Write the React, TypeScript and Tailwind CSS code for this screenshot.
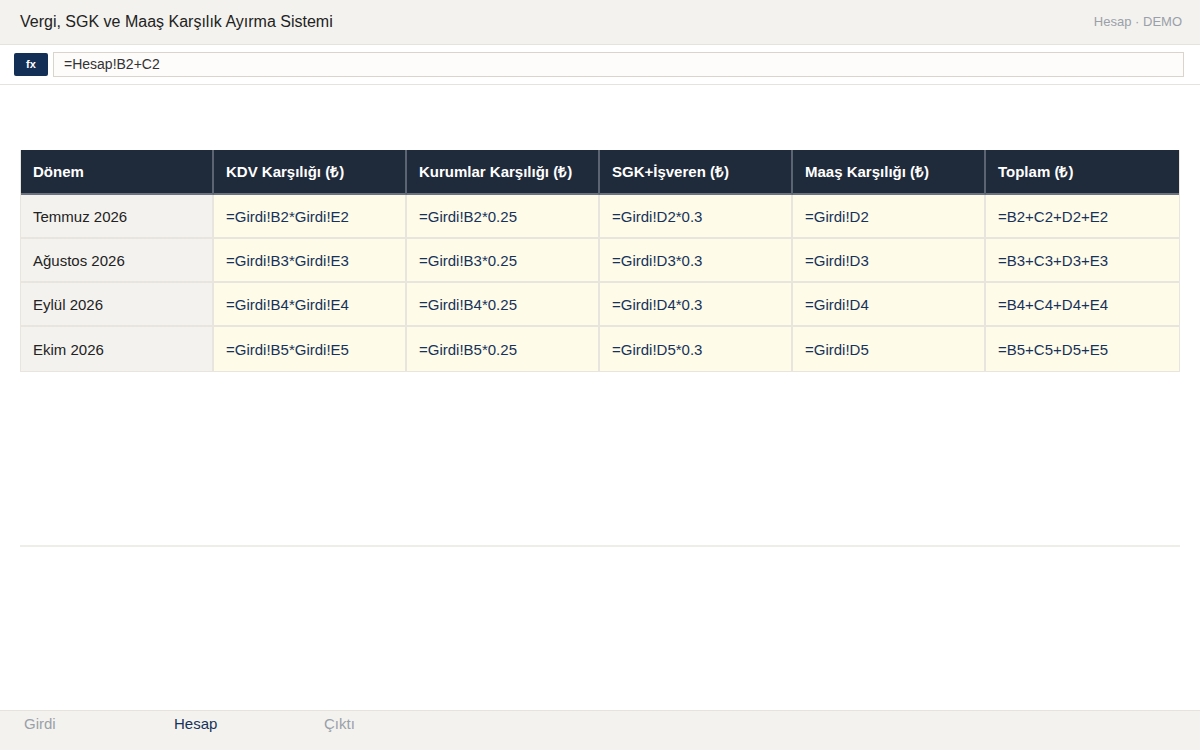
import React from 'react'

const cols = ['Dönem', 'KDV Karşılığı (₺)', 'Kurumlar Karşılığı (₺)', 'SGK+İşveren (₺)', 'Maaş Karşılığı (₺)', 'Toplam (₺)']

const rows = [
  ['Temmuz 2026', '=Girdi!B2*Girdi!E2', '=Girdi!B2*0.25', '=Girdi!D2*0.3', '=Girdi!D2', '=B2+C2+D2+E2'],
  ['Ağustos 2026', '=Girdi!B3*Girdi!E3', '=Girdi!B3*0.25', '=Girdi!D3*0.3', '=Girdi!D3', '=B3+C3+D3+E3'],
  ['Eylül 2026', '=Girdi!B4*Girdi!E4', '=Girdi!B4*0.25', '=Girdi!D4*0.3', '=Girdi!D4', '=B4+C4+D4+E4'],
  ['Ekim 2026', '=Girdi!B5*Girdi!E5', '=Girdi!B5*0.25', '=Girdi!D5*0.3', '=Girdi!D5', '=B5+C5+D5+E5'],
]

const App = () => {
  return (
    <div className="h-screen flex flex-col bg-white text-[#222] font-['Liberation_Sans',Arial,sans-serif]">
      <div className="h-[45px] shrink-0 bg-[#f3f2ee] border-b border-[#e6e3dc] flex items-center justify-between px-5">
        <div className="text-[16px] text-[#222]">Vergi, SGK ve Maaş Karşılık Ayırma Sistemi</div>
        <div className="text-[13px] text-[#9aa0aa] mr-[-2px]">Hesap · DEMO</div>
      </div>

      <div className="h-[40px] shrink-0 border-b border-[#e6e3dc] flex items-center gap-[5px] pl-[14px] pr-4">
        <div className="w-[34px] h-[23px] bg-[#142f55] text-white text-[11px] font-bold flex items-center justify-center rounded-[2px]">fx</div>
        <div className="flex-1 h-[25px] bg-[#fdfcfa] border border-[#d9d5cc] flex items-center px-[10px] text-[14px] text-[#333]">=Hesap!B2+C2</div>
      </div>

      <div className="flex-1 px-5 pt-[65px]">
        <div className="h-[397px] border-b-2 border-[#efede8]">
          <div className="grid grid-cols-6 border-l border-r border-b border-[#e8e5de]">
            {cols.map((c, i) => (
              <div key={c} className={`h-[45px] bg-[#1f2a3b] text-white text-[15px] font-bold flex items-center px-3 pt-[2px] ${i < 5 ? 'border-r-2 border-[#5b6473]' : ''} border-b-2 border-b-[#6b7280]`}>
                {c}
              </div>
            ))}
            {rows.map((r, ri) =>
              r.map((v, ci) => (
                <div
                  key={ri + '-' + ci}
                  className={`h-[44px] flex items-center px-3 text-[15px] pt-[2px] ${ci === 0 ? 'bg-[#f3f2ee] text-[#222]' : 'bg-[#fefbe8] text-[#17325a]'} ${ci < 5 ? 'border-r-2 border-[#e8e5de]' : ''} ${ri < 3 ? 'border-b-2 border-b-[#e8e5de]' : ''}`}
                >
                  {v}
                </div>
              ))
            )}
          </div>
        </div>
      </div>

      <div className="h-[40px] shrink-0 bg-[#f3f2ee] border-t border-[#e6e3dc] flex items-start text-[15px] pt-[2px]">
        <div className="w-[150px] pl-6 text-[#9aa0aa]">Girdi</div>
        <div className="w-[150px] pl-6 text-[#17325a]">Hesap</div>
        <div className="w-[150px] pl-6 text-[#9aa0aa]">Çıktı</div>
      </div>
    </div>
  )
}

export default App
